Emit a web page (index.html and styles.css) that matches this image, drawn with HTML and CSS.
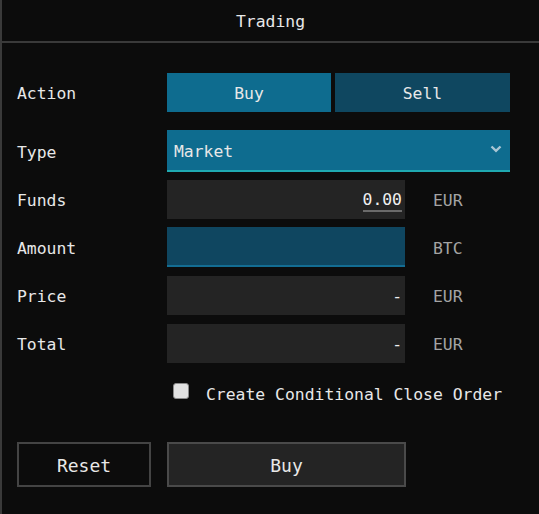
FILE: index.html
```html
<!DOCTYPE html>
<html>
<head>
<meta charset="utf-8">
<link rel="stylesheet" href="styles.css">
</head>
<body>
<div class="panel">
  <div class="header">Trading</div>
  <div class="form">
    <div class="row action-row">
      <div class="label">Action</div>
      <div class="seg">
        <div class="seg-btn active">Buy</div>
        <div class="seg-btn">Sell</div>
      </div>
    </div>
    <div class="row type-row">
      <div class="label">Type</div>
      <div class="select">
        <span>Market</span>
        <svg class="chev" width="12" height="8" viewBox="0 0 12 8"><path d="M1.5 1.5 L6 5.8 L10.5 1.5" fill="none" stroke="#a9c6d4" stroke-width="2.4"/></svg>
      </div>
    </div>
    <div class="row field-row funds">
      <div class="label">Funds</div>
      <div class="input"><span class="val under">0.00</span></div>
      <div class="unit">EUR</div>
    </div>
    <div class="row field-row amount">
      <div class="label">Amount</div>
      <div class="input focus"></div>
      <div class="unit">BTC</div>
    </div>
    <div class="row field-row price">
      <div class="label">Price</div>
      <div class="input"><span class="val">-</span></div>
      <div class="unit">EUR</div>
    </div>
    <div class="row field-row total">
      <div class="label">Total</div>
      <div class="input"><span class="val">-</span></div>
      <div class="unit">EUR</div>
    </div>
    <div class="check-row">
      <span class="box"></span>
      <span class="check-label">Create Conditional Close Order</span>
    </div>
    <div class="buttons">
      <div class="btn reset">Reset</div>
      <div class="btn submit">Buy</div>
    </div>
  </div>
</div>
</body>
</html>
```
FILE: styles.css
```css
html, body {
  margin: 0;
  padding: 0;
  background: #0c0c0c;
}
body {
  font-family: "DejaVu Sans Mono", "Liberation Mono", monospace;
  font-size: 16.4px;
  color: #e8e8e8;
}
.panel {
  height: 514px;
  border-left: 2px solid #3a3a3a;
  box-sizing: border-box;
}
.header {
  height: 43px;
  border-bottom: 2px solid #3a3a3a;
  display: flex;
  align-items: center;
  justify-content: center;
  padding-top: 1px;
  box-sizing: border-box;
}
.form {
  padding: 30px 29px 0 15px;
}
.row {
  display: grid;
  grid-template-columns: 150px 238px 1fr;
  align-items: center;
}
.label, .unit {
  padding-top: 2px;
}
.label {
  color: #e8e8e8;
}
.action-row, .type-row {
  grid-template-columns: 150px 1fr;
}
.seg {
  display: flex;
  gap: 4px;
  height: 39px;
}
.seg-btn {
  flex: 164px 0 0;
  display: flex;
  align-items: center;
  justify-content: center;
  padding-top: 2px;
  box-sizing: border-box;
  background: #0f4760;
}
.seg-btn + .seg-btn {
  flex: 1;
}
.seg-btn.active {
  background: #0e6c8f;
}
.type-row {
  margin-top: 18px;
}
.select {
  height: 40px;
  background: #0e6c8f;
  border-bottom: 2px solid #1fa9b1;
  display: flex;
  align-items: center;
  justify-content: space-between;
  padding: 2px 8px 0 7px;
  box-sizing: content-box;
}
.select {
  height: 38px;
}
.chev {
  display: block;
  margin-top: -5px;
}
.funds { margin-top: 8px; }
.amount { margin-top: 8px; }
.price { margin-top: 9px; }
.total { margin-top: 9px; }
.input {
  height: 39px;
  background: #242424;
  display: flex;
  align-items: center;
  justify-content: flex-end;
  padding: 2px 3px 0 0;
  box-sizing: border-box;
}
.input.focus {
  height: 40px;
  background: #0f4660;
  border-bottom: 2px solid #136d93;
}
.val {
  color: #f0f0f0;
}
.val.under {
  border-bottom: 2px solid #6a6a6a;
  line-height: 18px;
  padding-bottom: 1px;
  margin-top: 1px;
}
.unit {
  padding-left: 28px;
  color: #a4a4a4;
}
.check-row {
  display: flex;
  align-items: center;
  margin-top: 17px;
  padding-left: 156px;
  height: 26px;
}
.box {
  width: 14px;
  height: 14px;
  border: 1px solid #8a8a8a;
  border-radius: 3px;
  background: #e2e2e2;
  margin-top: -5px;
}
.check-label {
  margin-left: 17px;
  margin-top: 3px;
}
.buttons {
  display: flex;
  gap: 16px;
  margin-top: 36px;
}
.btn {
  height: 45px;
  box-sizing: border-box;
  border: 2px solid #444444;
  display: flex;
  align-items: center;
  justify-content: center;
  font-size: 18px;
  padding-top: 2px;
}
.reset {
  width: 134px;
  background: transparent;
}
.submit {
  width: 239px;
  background: #242424;
  border-color: #4a4a4a;
}
```
